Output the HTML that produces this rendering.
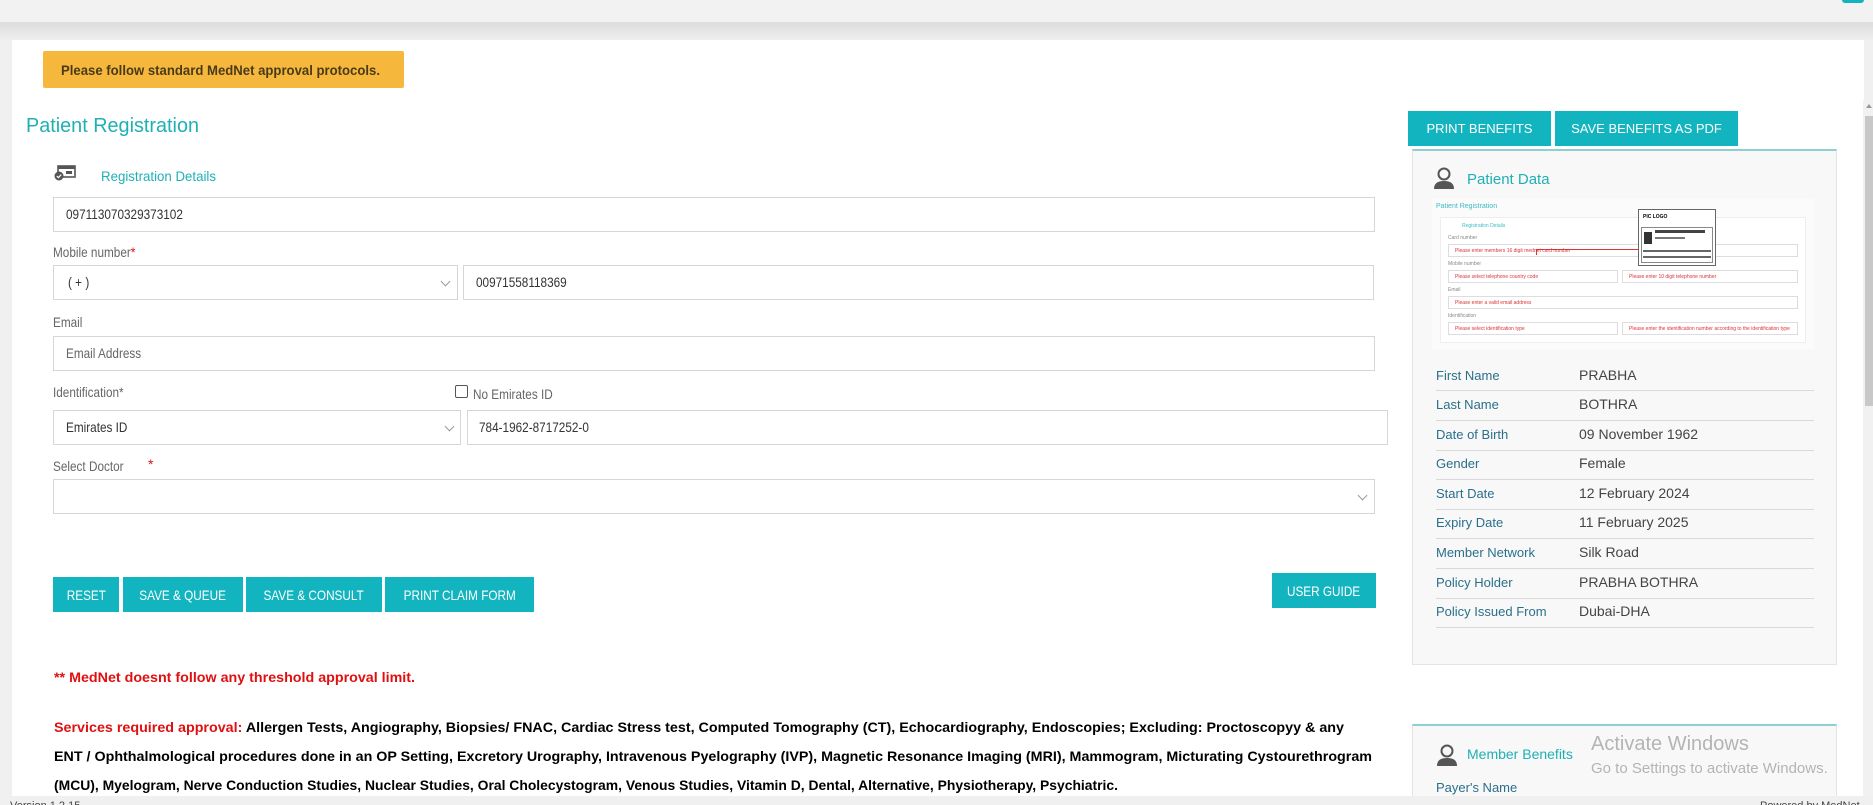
<!DOCTYPE html>
<html><head><meta charset="utf-8">
<style>
*{box-sizing:border-box;margin:0;padding:0}
body{width:1873px;height:805px;overflow:hidden;background:#f0f0f0;font-family:"Liberation Sans",Arial,sans-serif;position:relative}
.a{position:absolute}
.n{display:inline-block;transform:scaleX(.84);transform-origin:0 50%;white-space:nowrap}
.inp{position:absolute;background:#fff;border:1px solid #d6d6d6}
.txt{position:absolute;font-size:14px;color:#333;white-space:nowrap}
.lbl{position:absolute;font-size:14px;color:#666;white-space:nowrap}
.btn{position:absolute;background:#12b5bf;color:#fff;font-size:14px;display:flex;align-items:center;justify-content:center;white-space:nowrap}
.chev{position:absolute;width:7px;height:7px;border-right:1.5px solid #999;border-bottom:1.5px solid #999;transform:rotate(45deg)}
.rl{position:absolute;left:1436px;width:378px;height:1px;background:#d9d9d9}
.rk{position:absolute;left:1436px;font-size:13px;color:#2a6f8a}
.rv{position:absolute;left:1579px;font-size:14px;color:#444}
</style></head><body>
<div class="a" style="left:0;top:0;width:1873px;height:22px;background:#f2f2f2"></div>
<div class="a" style="left:0;top:22px;width:1873px;height:18px;background:linear-gradient(#dcdcdc,#efefef)"></div>
<div class="a" style="left:1842px;top:0;width:22px;height:3px;background:#12b5bf;border-radius:0 0 3px 3px"></div>
<div class="a" style="left:12px;top:40px;width:1852px;height:756px;background:#fff"></div>
<div class="a" style="left:43px;top:51px;width:361px;height:37px;background:#f5b83d;border-radius:2px"></div>
<svg class="a" style="left:0;top:0" width="1873" height="805">
<text x="61" y="75" font-family="Liberation Sans" font-weight="bold" font-size="14" fill="#4a3a18" textLength="319" lengthAdjust="spacingAndGlyphs">Please follow standard MedNet approval protocols.</text>
<text x="26" y="132" font-family="Liberation Sans" font-size="20" fill="#1fb0b6" textLength="173" lengthAdjust="spacingAndGlyphs">Patient Registration</text>
<text x="101" y="181" font-family="Liberation Sans" font-size="14" fill="#1fb0b6" textLength="115" lengthAdjust="spacingAndGlyphs">Registration Details</text>
<text x="54" y="682" font-family="Liberation Sans" font-weight="bold" font-size="14" fill="#e01010" textLength="361" lengthAdjust="spacingAndGlyphs">** MedNet doesnt follow any threshold approval limit.</text>
<text x="54" y="732" font-family="Liberation Sans" font-weight="bold" font-size="14" fill="#000" textLength="1290" lengthAdjust="spacingAndGlyphs"><tspan fill="#e01010">Services required approval:</tspan> Allergen Tests, Angiography, Biopsies/ FNAC, Cardiac Stress test, Computed Tomography (CT), Echocardiography, Endoscopies; Excluding: Proctoscopyy &amp; any</text>
<text x="54" y="761" font-family="Liberation Sans" font-weight="bold" font-size="14" fill="#000" textLength="1318" lengthAdjust="spacingAndGlyphs">ENT / Ophthalmological procedures done in an OP Setting, Excretory Urography, Intravenous Pyelography (IVP), Magnetic Resonance Imaging (MRI), Mammogram, Micturating Cystourethrogram</text>
<text x="54" y="790" font-family="Liberation Sans" font-weight="bold" font-size="14" fill="#000" textLength="1064" lengthAdjust="spacingAndGlyphs">(MCU), Myelogram, Nerve Conduction Studies, Nuclear Studies, Oral Cholecystogram, Venous Studies, Vitamin D, Dental, Alternative, Physiotherapy, Psychiatric.</text>
</svg>
<svg class="a" style="left:53px;top:165px" width="24" height="16"><rect x="5" y="1" width="17" height="11" fill="none" stroke="#555" stroke-width="1.6"/><rect x="5" y="1" width="17" height="3" fill="#555"/><rect x="13" y="6" width="6" height="3" fill="#555"/><circle cx="6" cy="11" r="4.5" fill="#555"/><path d="M3.8 11l1.6 1.6 2.8-3" stroke="#fff" stroke-width="1.2" fill="none"/></svg>
<div class="inp" style="left:53px;top:197px;width:1322px;height:35px"></div>
<div class="txt" style="left:66px;top:206px"><span class="n">097113070329373102</span></div>
<div class="lbl" style="left:53px;top:244px"><span class="n">Mobile number<span style="color:#e01010">*</span></span></div>
<div class="inp" style="left:53px;top:265px;width:405px;height:35px"></div>
<div class="txt" style="left:68px;top:274px"><span class="n">( + )</span></div>
<div class="chev" style="left:442px;top:278px"></div>
<div class="inp" style="left:463px;top:265px;width:911px;height:35px"></div>
<div class="txt" style="left:476px;top:274px"><span class="n">00971558118369</span></div>
<div class="lbl" style="left:53px;top:314px"><span class="n">Email</span></div>
<div class="inp" style="left:53px;top:336px;width:1322px;height:35px"></div>
<div class="txt" style="left:66px;top:345px;color:#666"><span class="n">Email Address</span></div>
<div class="lbl" style="left:53px;top:384px"><span class="n">Identification*</span></div>
<div class="a" style="left:455px;top:385px;width:13px;height:13px;border:1px solid #555;border-radius:2px;background:#fff"></div>
<div class="lbl" style="left:473px;top:386px"><span class="n">No Emirates ID</span></div>
<div class="inp" style="left:53px;top:410px;width:408px;height:35px"></div>
<div class="txt" style="left:66px;top:419px"><span class="n">Emirates ID</span></div>
<div class="chev" style="left:446px;top:423px"></div>
<div class="inp" style="left:467px;top:410px;width:921px;height:35px"></div>
<div class="txt" style="left:479px;top:419px"><span class="n">784-1962-8717252-0</span></div>
<div class="lbl" style="left:53px;top:458px"><span class="n">Select Doctor</span></div>
<div class="a" style="left:148px;top:456px;color:#e01010;font-size:14px">*</div>
<div class="inp" style="left:53px;top:479px;width:1322px;height:35px"></div>
<div class="chev" style="left:1359px;top:492px"></div>
<div class="btn" style="left:53px;top:577px;width:66px;height:35px"><span class="n" style="transform-origin:50% 50%">RESET</span></div>
<div class="btn" style="left:123px;top:577px;width:120px;height:35px"><span class="n" style="transform-origin:50% 50%">SAVE &amp; QUEUE</span></div>
<div class="btn" style="left:246px;top:577px;width:136px;height:35px"><span class="n" style="transform-origin:50% 50%">SAVE &amp; CONSULT</span></div>
<div class="btn" style="left:385px;top:577px;width:149px;height:35px"><span class="n" style="transform-origin:50% 50%">PRINT CLAIM FORM</span></div>
<div class="btn" style="left:1272px;top:573px;width:104px;height:35px"><span class="n" style="transform-origin:50% 50%">USER GUIDE</span></div>
<div class="btn" style="left:1408px;top:111px;width:143px;height:35px;font-size:13px">PRINT BENEFITS</div>
<div class="btn" style="left:1555px;top:111px;width:183px;height:35px;font-size:13px">SAVE BENEFITS AS PDF</div>
<div class="a" style="left:1412px;top:149px;width:425px;height:516px;background:#f8f8f8;border:1px solid #e4e4e4;border-top:2px solid #8fcfd0"></div>
<svg class="a" style="left:1433px;top:167px" width="22" height="22"><circle cx="11" cy="7" r="5.5" fill="none" stroke="#555" stroke-width="2"/><path d="M1 22c0-6 4-8 10-8s10 2 10 8z" fill="#555"/></svg>
<div class="a" style="left:1467px;top:171px;font-size:15px;color:#1fb0b6">Patient Data</div>
<div class="a" style="left:1432px;top:199px;width:382px;height:150px;background:#fbfbfb">
 <div class="a" style="left:4px;top:4px;font-size:7px;color:#3bbcc4">Patient Registration</div>
 <div class="a" style="left:8px;top:18px;width:366px;height:126px;border:1px solid #eee;background:#fff"></div>
 <div class="a" style="left:30px;top:24px;font-size:5px;color:#3bbcc4">Registration Details</div>
 <div class="a" style="left:16px;top:36px;font-size:5px;color:#888">Card number</div>
 <div class="a" style="left:16px;top:45px;width:350px;height:13px;border:1px solid #ddd;font-size:5px;color:#d33;padding:3px 6px">Please enter members 16 digit mednet card number</div>
 <div class="a" style="left:16px;top:62px;font-size:5px;color:#888">Mobile number</div>
 <div class="a" style="left:16px;top:71px;width:170px;height:13px;border:1px solid #ddd;font-size:5px;color:#d33;padding:3px 6px">Please select telephone country code</div>
 <div class="a" style="left:190px;top:71px;width:176px;height:13px;border:1px solid #ddd;font-size:5px;color:#d33;padding:3px 6px">Please enter 10 digit telephone number</div>
 <div class="a" style="left:16px;top:88px;font-size:5px;color:#888">Email</div>
 <div class="a" style="left:16px;top:97px;width:350px;height:13px;border:1px solid #ddd;font-size:5px;color:#d33;padding:3px 6px">Please enter a valid email address</div>
 <div class="a" style="left:16px;top:114px;font-size:5px;color:#888">Identification</div>
 <div class="a" style="left:16px;top:123px;width:170px;height:13px;border:1px solid #ddd;font-size:5px;color:#d33;padding:3px 6px">Please select identification type</div>
 <div class="a" style="left:190px;top:123px;width:176px;height:13px;border:1px solid #ddd;font-size:5px;color:#d33;padding:3px 6px">Please enter the identification number according to the identification type</div>
 <div class="a" style="left:206px;top:10px;width:78px;height:57px;border:1px solid #666;background:#fff">
  <div class="a" style="left:4px;top:4px;font-size:5px;font-weight:bold">PIC LOGO</div>
  <div class="a" style="left:2px;top:17px;width:72px;height:36px;border:1px solid #888"></div>
  <div class="a" style="left:5px;top:22px;width:8px;height:12px;background:#333"></div>
  <div class="a" style="left:16px;top:20px;width:50px;height:3px;background:#444"></div>
  <div class="a" style="left:16px;top:27px;width:30px;height:2px;background:#777"></div>
  <div class="a" style="left:4px;top:40px;width:68px;height:2px;background:#666"></div>
  <div class="a" style="left:4px;top:46px;width:68px;height:2px;background:#666"></div>
 </div>
 <div class="a" style="left:104px;top:50px;width:1px;height:6px;background:#d33"></div>
 <div class="a" style="left:104px;top:50px;width:102px;height:1px;background:#d33"></div>
</div>
<div class="rk" style="top:368px">First Name</div><div class="rv" style="top:367px">PRABHA</div><div class="rl" style="top:390px"></div>
<div class="rk" style="top:397px">Last Name</div><div class="rv" style="top:396px">BOTHRA</div><div class="rl" style="top:420px"></div>
<div class="rk" style="top:427px">Date of Birth</div><div class="rv" style="top:426px">09 November 1962</div><div class="rl" style="top:450px"></div>
<div class="rk" style="top:456px">Gender</div><div class="rv" style="top:455px">Female</div><div class="rl" style="top:479px"></div>
<div class="rk" style="top:486px">Start Date</div><div class="rv" style="top:485px">12 February 2024</div><div class="rl" style="top:509px"></div>
<div class="rk" style="top:515px">Expiry Date</div><div class="rv" style="top:514px">11 February 2025</div><div class="rl" style="top:538px"></div>
<div class="rk" style="top:545px">Member Network</div><div class="rv" style="top:544px">Silk Road</div><div class="rl" style="top:568px"></div>
<div class="rk" style="top:575px">Policy Holder</div><div class="rv" style="top:574px">PRABHA BOTHRA</div><div class="rl" style="top:598px"></div>
<div class="rk" style="top:604px">Policy Issued From</div><div class="rv" style="top:603px">Dubai-DHA</div><div class="rl" style="top:627px"></div>
<div class="a" style="left:1412px;top:724px;width:425px;height:80px;background:#f8f8f8;border:1px solid #e4e4e4;border-top:2px solid #8fcfd0"></div>
<svg class="a" style="left:1436px;top:744px" width="22" height="22"><circle cx="11" cy="7" r="5.5" fill="none" stroke="#555" stroke-width="2"/><path d="M1 22c0-6 4-8 10-8s10 2 10 8z" fill="#555"/></svg>
<div class="a" style="left:1467px;top:746px;font-size:14px;color:#1fb0b6">Member Benefits</div>
<div class="rk" style="top:780px">Payer's Name</div>
<div class="a" style="left:1591px;top:733px;font-size:20px;color:#b4b4b4">Activate Windows</div>
<div class="a" style="left:1591px;top:760px;font-size:15px;color:#b4b4b4">Go to Settings to activate Windows.</div>
<div class="a" style="left:1863px;top:100px;width:10px;height:696px;background:#f1f1f1"></div>
<div class="a" style="left:1865px;top:116px;width:8px;height:290px;background:#c8c8c8"></div>
<div class="a" style="left:1866px;top:104px;width:0;height:0;border-left:3px solid transparent;border-right:3px solid transparent;border-bottom:4px solid #999"></div>
<div class="a" style="left:0;top:796px;width:1873px;height:9px;background:#f0f0f0;overflow:hidden">
<div class="a" style="left:10px;top:4px;font-size:11px;color:#444">Version 1.2.15</div>
<div class="a" style="left:1760px;top:4px;font-size:11px;color:#444">Powered by MedNet</div>
</div>
</body></html>
